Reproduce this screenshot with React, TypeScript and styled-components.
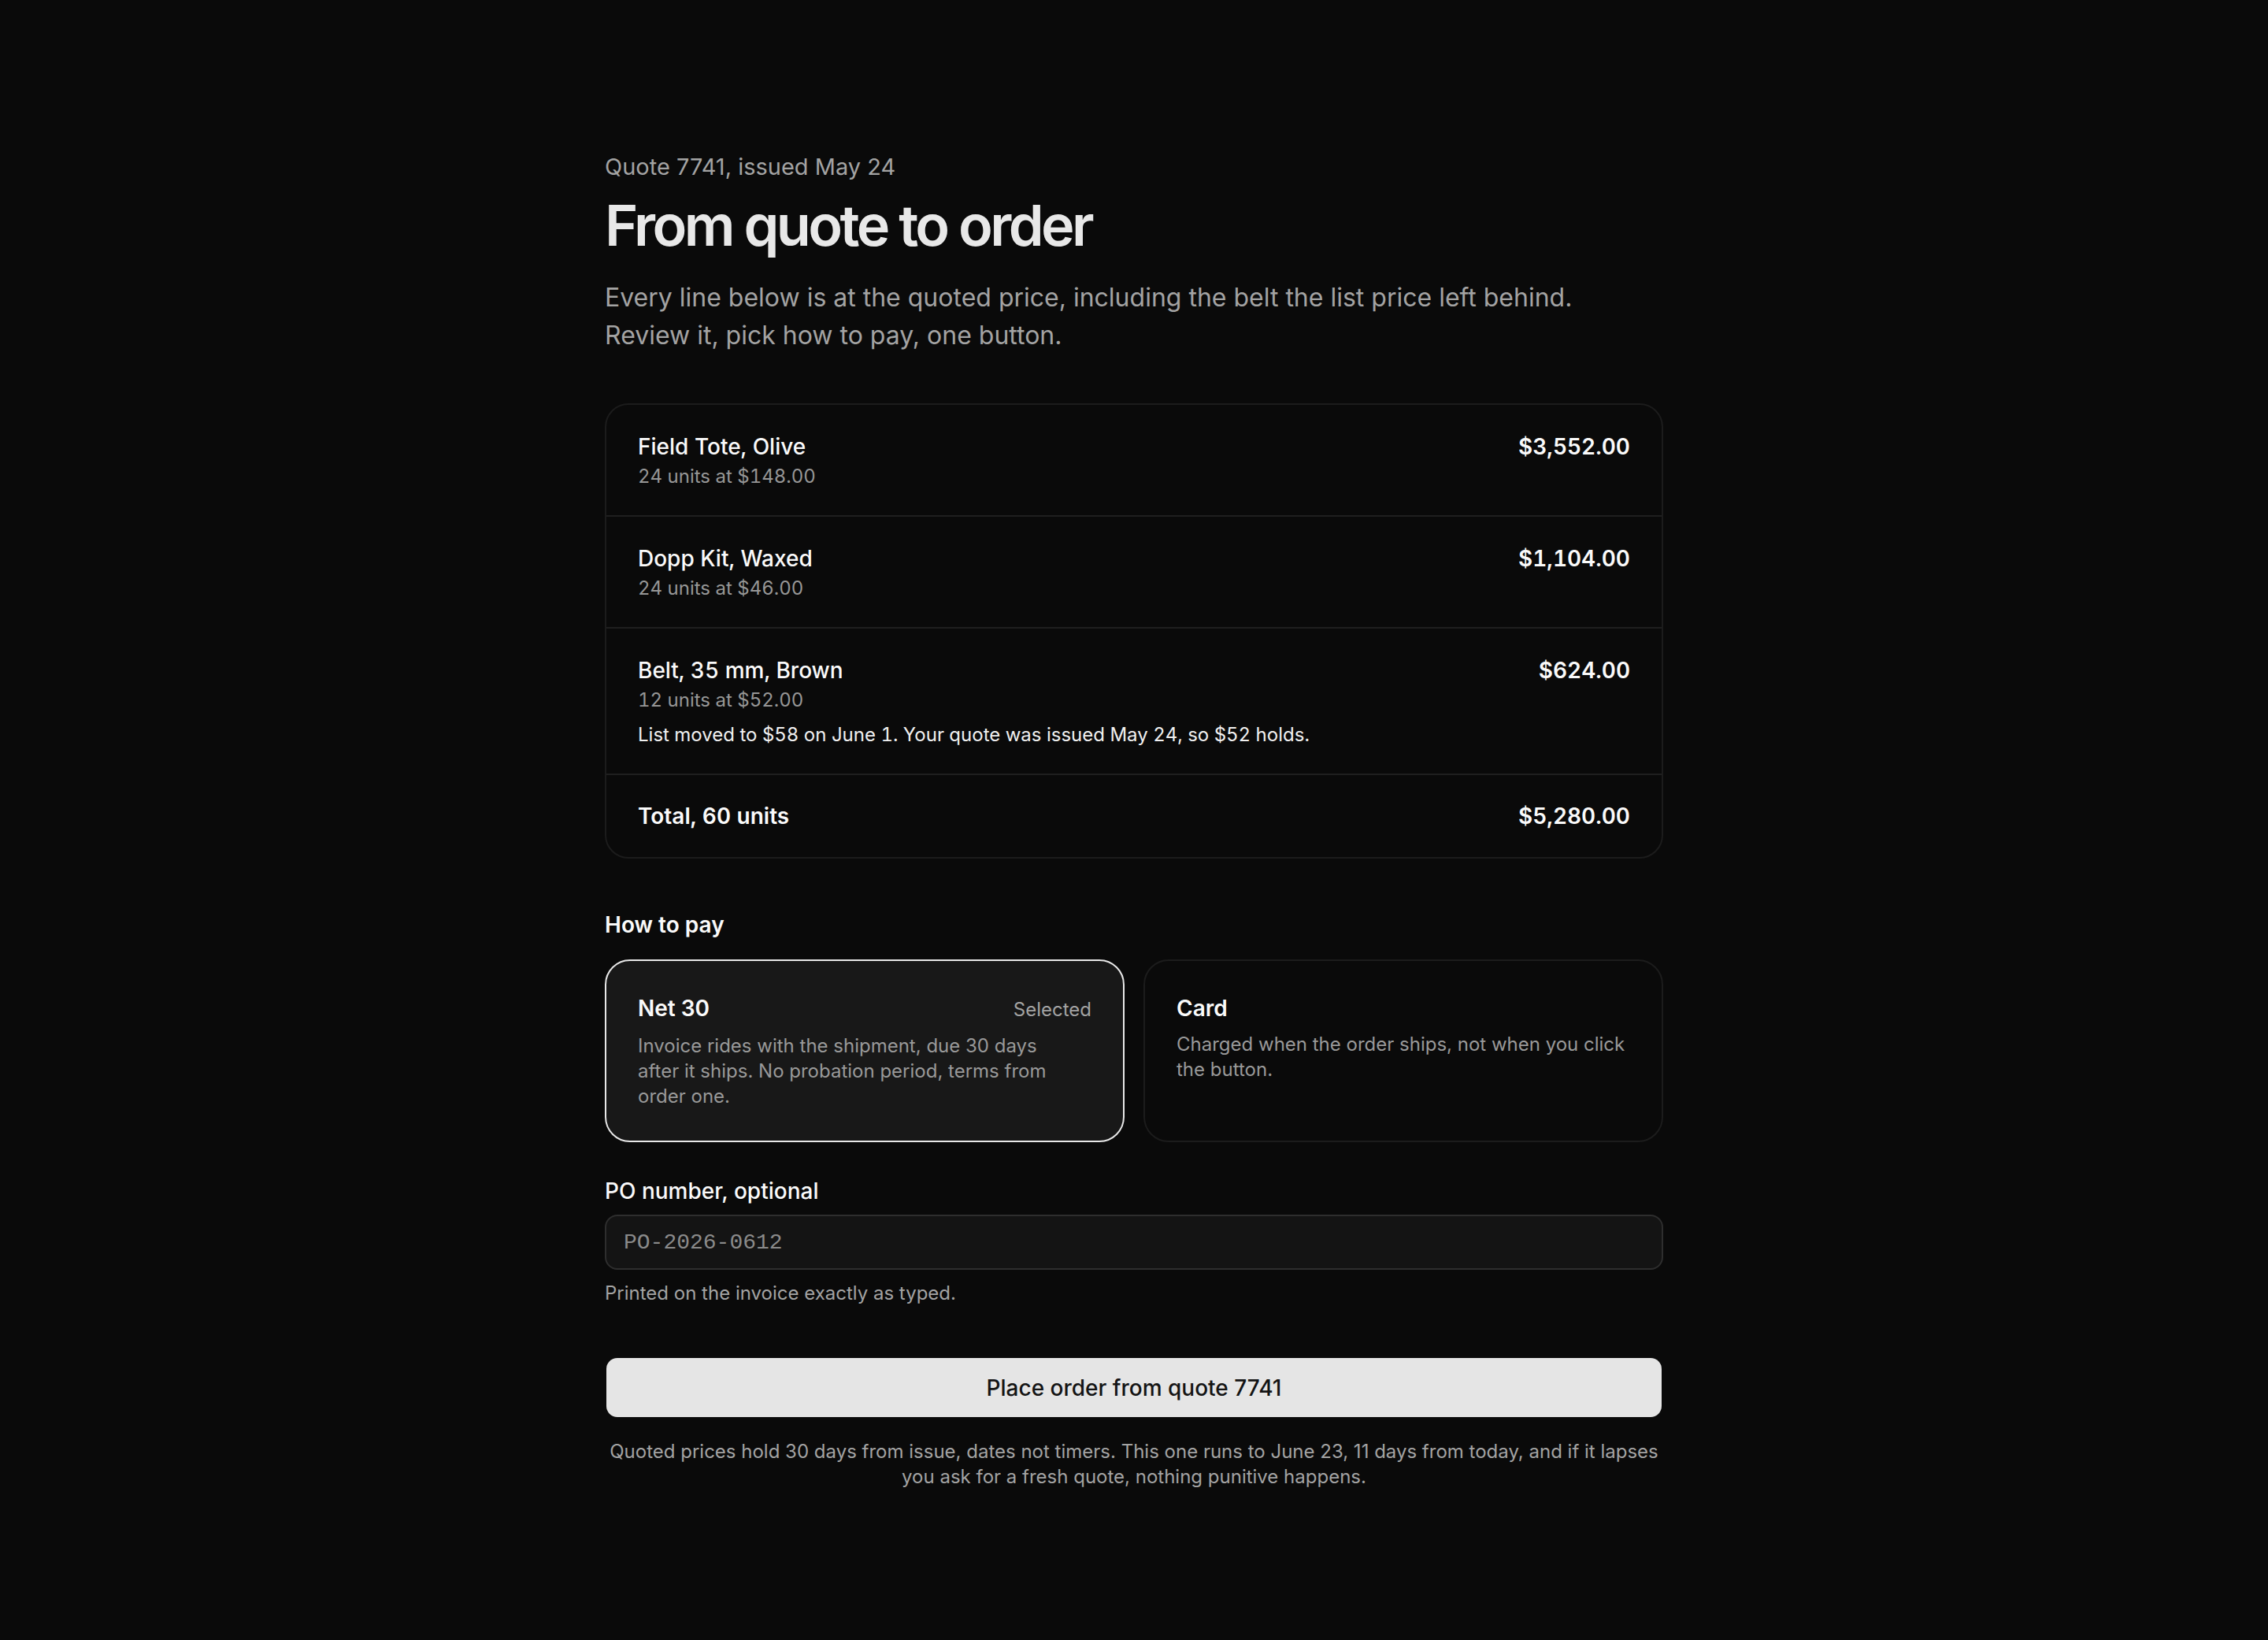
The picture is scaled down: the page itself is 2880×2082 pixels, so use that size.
import styled, { createGlobalStyle } from "styled-components";

const GlobalStyle = createGlobalStyle`
  html, body {
    margin: 0;
    padding: 0;
    background: #0a0a0a;
  }
  body {
    font-family: Inter, "Noto Sans", "Liberation Sans", sans-serif;
    color: #ededed;
    -webkit-font-smoothing: antialiased;
  }
  * {
    box-sizing: border-box;
  }
`;

const Page = styled.main`
  min-height: 100vh;
  background: #0a0a0a;
  padding: 192px 48px 160px;
`;

const Column = styled.div`
  max-width: 1344px;
  margin: 0 auto;
  display: flex;
  flex-direction: column;
`;

const Eyebrow = styled.p`
  margin: 0;
  font-size: 29px;
  line-height: 40px;
  color: #a3a3a3;
`;

const Title = styled.h1`
  margin: 14px 0 0;
  font-size: 72px;
  line-height: 80px;
  font-weight: 600;
  letter-spacing: -0.05em;
  color: #e8e8e8;
`;

const Lede = styled.p`
  margin: 28px 0 0;
  max-width: 1280px;
  font-size: 32px;
  line-height: 48px;
  color: #a3a3a3;
`;

const LineCard = styled.section`
  margin-top: 62px;
  border: 2px solid #1c1c1c;
  border-radius: 30px;
  overflow: hidden;
  font-variant-numeric: tabular-nums;
`;

const LineRow = styled.div<{ $total?: boolean }>`
  display: flex;
  justify-content: space-between;
  align-items: flex-start;
  gap: 32px;
  padding: ${(p) => (p.$total ? "32px 40px" : "33px 40px")};
  & + & {
    border-top: 2px solid #1f1f1f;
  }
`;

const LineText = styled.div`
  display: flex;
  flex-direction: column;
`;

const LineName = styled.span<{ $strong?: boolean }>`
  font-size: 28px;
  line-height: 40px;
  font-weight: ${(p) => (p.$strong ? 600 : 500)};
  color: #fafafa;
`;

const LineSub = styled.span`
  margin-top: 2px;
  font-size: 24px;
  line-height: 32px;
  color: #969696;
`;

const LineNote = styled.span`
  margin-top: 12px;
  font-size: 24px;
  line-height: 32px;
  color: #f0f0f0;
`;

const Amount = styled.span`
  font-size: 28px;
  line-height: 40px;
  font-weight: 600;
  color: #fafafa;
  white-space: nowrap;
`;

const SectionLabel = styled.h2`
  margin: 64px 0 0;
  font-size: 28px;
  line-height: 40px;
  font-weight: 600;
  color: #fafafa;
`;

const Options = styled.div`
  margin-top: 24px;
  display: grid;
  grid-template-columns: 1fr 1fr;
  gap: 24px;
`;

const Option = styled.button<{ $selected?: boolean }>`
  display: flex;
  flex-direction: column;
  align-items: stretch;
  text-align: left;
  padding: 40px;
  border-radius: 32px;
  border: 2px solid ${(p) => (p.$selected ? "#e8e8e8" : "#1c1c1c")};
  background: ${(p) => (p.$selected ? "#181818" : "#0a0a0a")};
  font-family: inherit;
  color: inherit;
  cursor: pointer;
`;

const OptionHead = styled.div`
  display: flex;
  justify-content: space-between;
  align-items: baseline;
`;

const OptionName = styled.span`
  font-size: 28px;
  line-height: 40px;
  font-weight: 600;
  color: #fafafa;
`;

const OptionTag = styled.span`
  font-size: 24px;
  line-height: 40px;
  color: #a3a3a3;
`;

const OptionBody = styled.p`
  margin: 10px 0 0;
  font-size: 24px;
  line-height: 32px;
  color: #999999;
  text-wrap: pretty;
`;

const FieldLabel = styled.label`
  margin-top: 42px;
  font-size: 28px;
  line-height: 40px;
  font-weight: 500;
  color: #fafafa;
`;

const Input = styled.input`
  margin-top: 10px;
  height: 70px;
  padding: 0 22px;
  border: 2px solid #2e2e2e;
  border-radius: 16px;
  background: #141414;
  color: #ededed;
  font-family: "Liberation Mono", "DejaVu Sans Mono", monospace;
  font-size: 28px;
  outline: none;
  &::placeholder {
    color: #8a8a8a;
  }
`;

const Hint = styled.p`
  margin: 14px 0 0;
  font-size: 24px;
  line-height: 32px;
  color: #a3a3a3;
`;

const Submit = styled.button`
  margin: 66px 2px 0;
  height: 75px;
  border: none;
  border-radius: 14px;
  background: #e5e5e5;
  color: #141414;
  font-family: inherit;
  font-size: 28px;
  font-weight: 500;
  cursor: pointer;
`;

const Fine = styled.p`
  margin: 28px 0 0;
  font-size: 24px;
  line-height: 32px;
  text-align: center;
  color: #a3a3a3;
`;

type Line = {
  name: string;
  sub: string;
  amount: string;
  note?: string;
};

const lines: Line[] = [
  { name: "Field Tote, Olive", sub: "24 units at $148.00", amount: "$3,552.00" },
  { name: "Dopp Kit, Waxed", sub: "24 units at $46.00", amount: "$1,104.00" },
  {
    name: "Belt, 35 mm, Brown",
    sub: "12 units at $52.00",
    amount: "$624.00",
    note: "List moved to $58 on June 1. Your quote was issued May 24, so $52 holds.",
  },
];

function App() {
  return (
    <>
      <GlobalStyle />
      <Page>
        <Column>
          <Eyebrow>Quote 7741, issued May 24</Eyebrow>
          <Title>From quote to order</Title>
          <Lede>
            Every line below is at the quoted price, including the belt the list
            price left behind. Review it, pick how to pay, one button.
          </Lede>

          <LineCard>
            {lines.map((line) => (
              <LineRow key={line.name}>
                <LineText>
                  <LineName>{line.name}</LineName>
                  <LineSub>{line.sub}</LineSub>
                  {line.note && <LineNote>{line.note}</LineNote>}
                </LineText>
                <Amount>{line.amount}</Amount>
              </LineRow>
            ))}
            <LineRow $total>
              <LineName $strong>Total, 60 units</LineName>
              <Amount>$5,280.00</Amount>
            </LineRow>
          </LineCard>

          <SectionLabel>How to pay</SectionLabel>
          <Options>
            <Option $selected type="button">
              <OptionHead>
                <OptionName>Net 30</OptionName>
                <OptionTag>Selected</OptionTag>
              </OptionHead>
              <OptionBody>
                Invoice rides with the shipment, due 30 days after it ships. No
                probation period, terms from order one.
              </OptionBody>
            </Option>
            <Option type="button">
              <OptionHead>
                <OptionName>Card</OptionName>
              </OptionHead>
              <OptionBody>
                Charged when the order ships, not when you click the button.
              </OptionBody>
            </Option>
          </Options>

          <FieldLabel htmlFor="po">PO number, optional</FieldLabel>
          <Input id="po" placeholder="PO-2026-0612" />
          <Hint>Printed on the invoice exactly as typed.</Hint>

          <Submit type="button">Place order from quote 7741</Submit>
          <Fine>
            Quoted prices hold 30 days from issue, dates not timers. This one runs
            to June 23, 11 days from today, and if it lapses you ask for a fresh
            quote, nothing punitive happens.
          </Fine>
        </Column>
      </Page>
    </>
  );
}

export default App;
